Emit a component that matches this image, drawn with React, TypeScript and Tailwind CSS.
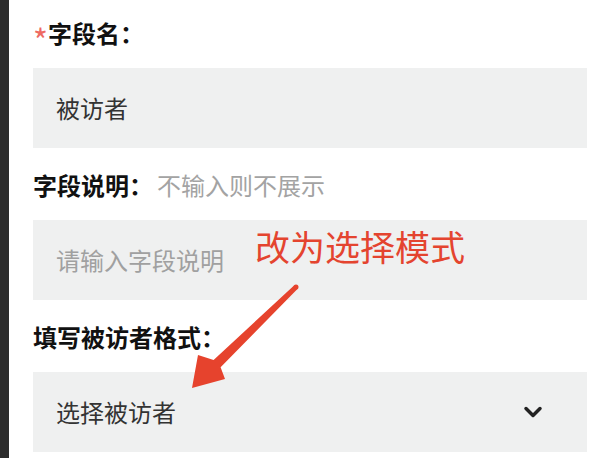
import { ChevronDown } from 'lucide-react';

const font = { fontFamily: '"Noto Sans CJK SC", "Noto Sans", sans-serif' };

function Label({ children, required, hint }: { children: string; required?: boolean; hint?: string }) {
  return (
    <div className="flex h-8 items-center text-[24px] leading-8">
      {required && (
        <span className="relative top-[6px] w-[15px] text-[32px] leading-8 text-[#ee6a63]">*</span>
      )}
      <span className="font-bold text-[#111111]">{children}</span>
      {hint && <span className="ml-1 text-[#a3a3a3]">{hint}</span>}
    </div>
  );
}

function Field({ value, placeholder, select }: { value?: string; placeholder?: string; select?: boolean }) {
  return (
    <div className="mt-[19px] flex h-20 items-center justify-between bg-[#eff0f0] pl-[23px] pr-[40px] text-[24px]">
      <span className={value ? 'text-[#333333]' : 'text-[#a0a0a0]'}>{value || placeholder}</span>
      {select && <ChevronDown className="h-7 w-7 text-[#222222]" strokeWidth={3} />}
    </div>
  );
}

export default function App() {
  return (
    <div className="relative flex h-[458px] w-[606px] overflow-hidden bg-white" style={font}>
      <div className="w-[9px] shrink-0 bg-[#2c2c2c]" />
      <div className="ml-6 w-[554px] pt-[17px]">
        <Label required>字段名：</Label>
        <Field value="被访者" />
        <div className="mt-[21px]">
          <Label hint="不输入则不展示">字段说明：</Label>
        </div>
        <Field placeholder="请输入字段说明" />
        <div className="mt-[21px]">
          <Label>填写被访者格式：</Label>
        </div>
        <Field value="选择被访者" select />
      </div>

      <div className="absolute left-[255px] top-[225px] text-[35px] leading-[42px] text-[#e4442f]">改为选择模式</div>
      <svg className="absolute left-0 top-0" width="606" height="458" viewBox="0 0 606 458">
        <polygon
          fill="#e6432d"
          points="192,388 198,355 213.6,360 294.3,285.2 297.7,288.8 220.6,367.2 225,379"
        />
        <circle cx="296" cy="287" r="2.5" fill="#e6432d" />
      </svg>
    </div>
  );
}
